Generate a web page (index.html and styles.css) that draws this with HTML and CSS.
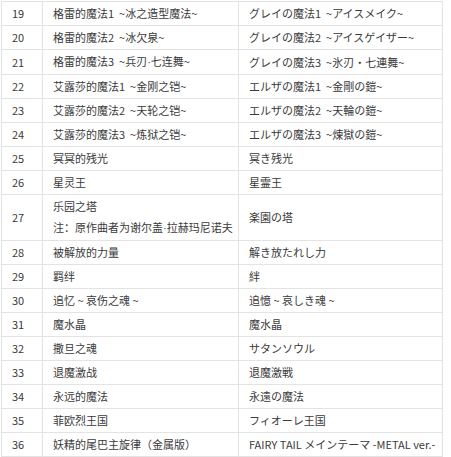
FILE: index.html
```html
<!DOCTYPE html>
<html lang="zh">
<head>
<meta charset="utf-8">
<link rel="stylesheet" href="styles.css">
</head>
<body>
<table class="tracks">
  <colgroup>
    <col class="c-num">
    <col class="c-zh">
    <col class="c-ja">
  </colgroup>
  <tbody>
    <tr><td>19</td><td>格雷的魔法1 &nbsp;~冰之造型魔法~</td><td class="ja">グレイの魔法1 &nbsp;~アイスメイク~</td></tr>
    <tr><td>20</td><td>格雷的魔法2 &nbsp;~冰欠泉~</td><td class="ja">グレイの魔法2 &nbsp;~アイスゲイザー~</td></tr>
    <tr><td>21</td><td>格雷的魔法3 &nbsp;~兵刃<span class="dot">·</span>七连舞~</td><td class="ja">グレイの魔法3 &nbsp;~氷刃・七連舞~</td></tr>
    <tr><td>22</td><td>艾露莎的魔法1 &nbsp;~金刚之铠~</td><td class="ja">エルザの魔法1 &nbsp;~金剛の鎧~</td></tr>
    <tr><td>23</td><td>艾露莎的魔法2 &nbsp;~天轮之铠~</td><td class="ja">エルザの魔法2 &nbsp;~天輪の鎧~</td></tr>
    <tr><td>24</td><td>艾露莎的魔法3 &nbsp;~炼狱之铠~</td><td class="ja">エルザの魔法3 &nbsp;~煉獄の鎧~</td></tr>
    <tr><td>25</td><td>冥冥的残光</td><td class="ja">冥き残光</td></tr>
    <tr><td>26</td><td>星灵王</td><td class="ja">星霊王</td></tr>
    <tr><td>27</td><td><div>乐园之塔</div><div>注：原作曲者为谢尔盖<span class="dot">·</span>拉赫玛尼诺夫</div></td><td class="ja">楽園の塔</td></tr>
    <tr><td>28</td><td>被解放的力量</td><td class="ja">解き放たれし力</td></tr>
    <tr><td>29</td><td>羁绊</td><td class="ja">絆</td></tr>
    <tr><td>30</td><td>追忆 ~ 哀伤之魂 ~</td><td class="ja">追憶 ~ 哀しき魂 ~</td></tr>
    <tr><td>31</td><td>魔水晶</td><td class="ja">魔水晶</td></tr>
    <tr><td>32</td><td>撒旦之魂</td><td class="ja">サタンソウル</td></tr>
    <tr><td>33</td><td>退魔激战</td><td class="ja">退魔激戦</td></tr>
    <tr><td>34</td><td>永远的魔法</td><td class="ja">永遠の魔法</td></tr>
    <tr><td>35</td><td>菲欧烈王国</td><td class="ja">フィオーレ王国</td></tr>
    <tr><td>36</td><td>妖精的尾巴主旋律（金属版）</td><td class="ja">FAIRY TAIL メインテーマ -METAL ver.-</td></tr>
  </tbody>
</table>
</body>
</html>
```

FILE: styles.css
```css
html, body {
  margin: 0;
  padding: 0;
  background: #fff;
}

body {
  padding: 1px 0 0 1px;
}

.tracks {
  border-collapse: collapse;
  table-layout: fixed;
  width: 441px;
  font-family: "Noto Sans CJK SC", sans-serif;
  font-size: 11px;
  color: #3a3a3a;
}

.c-num { width: 41px; }
.c-zh { width: 196px; }
.c-ja { width: 204px; }

.tracks td {
  border: 1px solid #e3e3e3;
  padding: 1px 10px;
  line-height: 21px;
  height: 21px;
  vertical-align: middle;
  white-space: nowrap;
  overflow: hidden;
}

.tracks td.ja {
  font-family: "Noto Sans CJK JP", sans-serif;
}

.dot {
  font-family: "Liberation Sans", sans-serif;
}
```
